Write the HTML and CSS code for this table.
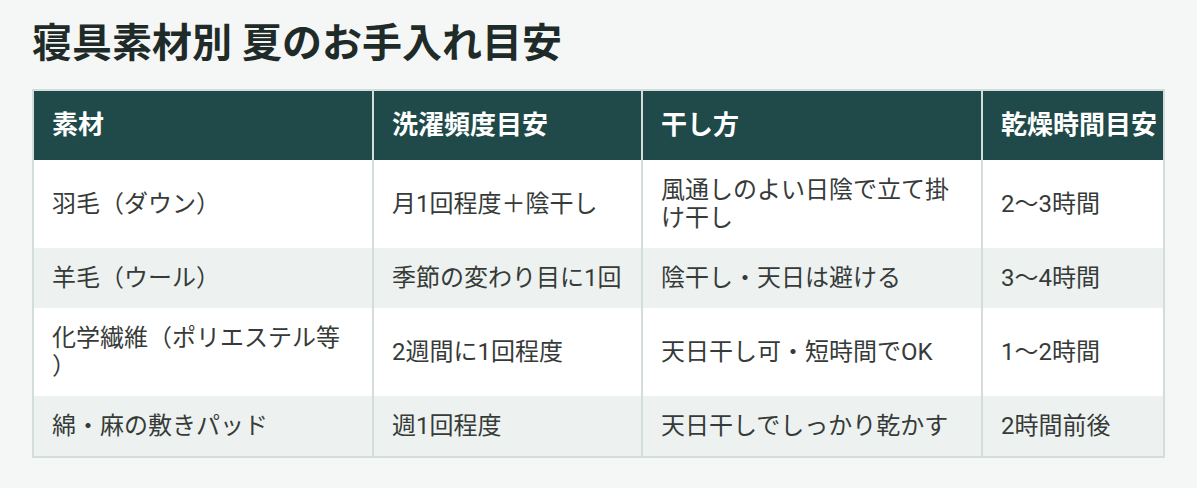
FILE: index.html
```html
<!DOCTYPE html>
<html lang="ja">
<head>
<meta charset="utf-8">
<title>寝具素材別 夏のお手入れ目安</title>
<link rel="stylesheet" href="styles.css">
</head>
<body>
<main class="page">
  <h1 class="title">寝具素材別 夏のお手入れ目安</h1>
  <table class="care-table">
    <colgroup>
      <col class="col-material">
      <col class="col-wash">
      <col class="col-dry">
      <col class="col-time">
    </colgroup>
    <thead>
      <tr>
        <th>素材</th>
        <th>洗濯頻度目安</th>
        <th>干し方</th>
        <th>乾燥時間目安</th>
      </tr>
    </thead>
    <tbody>
      <tr>
        <td>羽毛（ダウン）</td>
        <td>月1回程度＋陰干し</td>
        <td>風通しのよい日陰で立て掛け干し</td>
        <td>2〜3時間</td>
      </tr>
      <tr>
        <td>羊毛（ウール）</td>
        <td>季節の変わり目に1回</td>
        <td>陰干し・天日は避ける</td>
        <td>3〜4時間</td>
      </tr>
      <tr>
        <td>化学繊維（ポリエステル等）</td>
        <td>2週間に1回程度</td>
        <td>天日干し可・短時間でOK</td>
        <td>1〜2時間</td>
      </tr>
      <tr>
        <td>綿・麻の敷きパッド</td>
        <td>週1回程度</td>
        <td>天日干しでしっかり乾かす</td>
        <td>2時間前後</td>
      </tr>
    </tbody>
  </table>
</main>
</body>
</html>
```

FILE: styles.css
```css
* {
  box-sizing: border-box;
}

html, body {
  margin: 0;
  padding: 0;
  background: #f5f7f6;
}

body {
  font-family: Roboto, "Noto Sans CJK JP", sans-serif;
  color: #333836;
}

.page {
  padding: 20px 32px 32px;
}

.title {
  margin: 0 0 21px;
  font-size: 40px;
  line-height: 48px;
  font-weight: 700;
  color: #1f2b28;
  font-family: Roboto, "Noto Sans CJK JP", sans-serif;
}

.care-table {
  width: 100%;
  table-layout: fixed;
  border-collapse: separate;
  border-spacing: 0;
  border: 2px solid #d3dedb;
  background: #ffffff;
}

.col-material { width: 340px; }
.col-wash { width: 269px; }
.col-dry { width: 340px; }
.col-time { width: auto; }

.care-table th,
.care-table td {
  text-align: left;
  border-right: 2px solid #d3dedb;
  line-break: anywhere;
  text-spacing-trim: space-all;
}

.care-table th:last-child,
.care-table td:last-child {
  border-right: none;
}

.care-table th {
  background: #1f4a49;
  color: #ffffff;
  font-size: 26px;
  line-height: 29px;
  font-weight: 700;
  padding: 20px 18px;
  white-space: nowrap;
}

.care-table td {
  font-size: 24px;
  line-height: 28px;
  font-weight: 400;
  padding: 16px 18px;
  vertical-align: middle;
  color: #363b39;
}

.care-table tbody tr:nth-child(even) td {
  background: #edf2f0;
}
```
